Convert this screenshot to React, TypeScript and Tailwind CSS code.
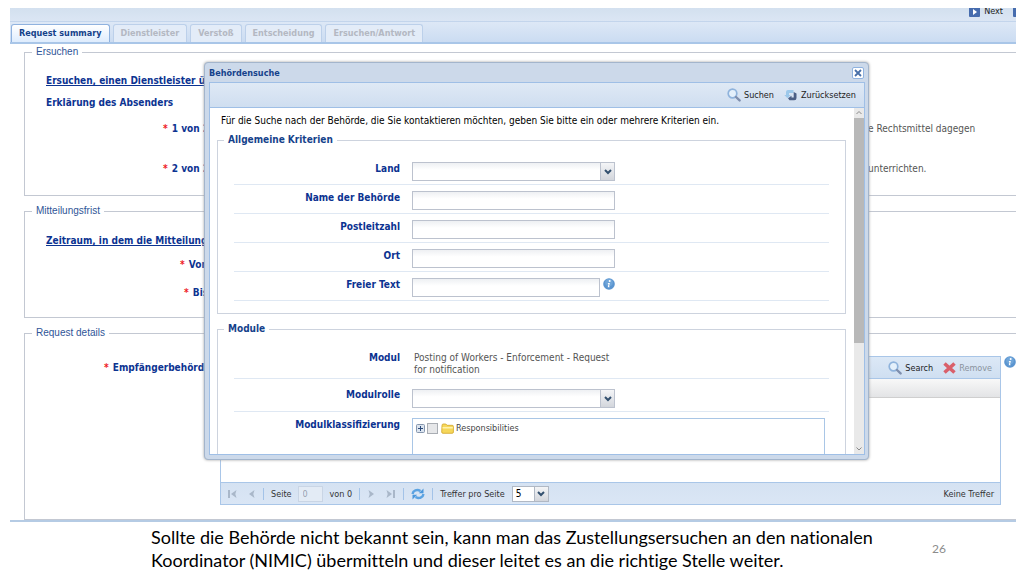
import { ReactNode } from "react";

type FieldRowProps = {
  id: string;
  label: string;
  children: ReactNode;
};

const tabs = ["Dienstleister", "Verstoß", "Entscheidung", "Ersuchen/Antwort"];

function Chevron() {
  return (
    <svg viewBox="0 0 8 6" className="h-[6px] w-2" fill="none" stroke="#33506f" strokeWidth="2">
      <path d="M1 1l3 3 3-3" />
    </svg>
  );
}

function SearchIcon() {
  return (
    <svg viewBox="0 0 14 14" className="h-3.5 w-3.5 shrink-0" fill="none">
      <circle cx="5.5" cy="5.5" r="4.3" fill="#e4f0fb" stroke="#8fb3dc" strokeWidth="1.7" />
      <path d="M9 9l3.6 3.4" stroke="#7f8fae" strokeWidth="2.4" strokeLinecap="round" />
    </svg>
  );
}

function ResetIcon() {
  return (
    <svg viewBox="0 0 14 12" className="h-3 w-3.5 shrink-0">
      <path d="M9.500 1H4Q2 1 2 3v3H.3l3.200 3.200L6.700 6H5V4h4.500z" fill="#9cc8ea" />
      <path d="M5.500 11.200h4.700q2.300 0 2.300-2.200V4.500L9.700 3v5.400H7.500V6.700L4 9.200z" fill="#4b5f85" />
    </svg>
  );
}

function InfoIcon() {
  return (
    <svg viewBox="0 0 12 12" className="h-3 w-3 shrink-0">
      <circle cx="6" cy="6" r="5.800" fill="#5b95d0" />
      <circle cx="6" cy="4.500" r="3.800" fill="#7db0e0" opacity=".6" />
      <circle cx="6.700" cy="3" r="1" fill="#fff" />
      <path d="M5 5h1.900L6 8.400h.8L6.500 9.300H4.700L5.500 5.900H4.800z" fill="#fff" />
    </svg>
  );
}

function NextIcon() {
  return (
    <svg viewBox="0 0 11 10" className="h-2.5 w-[11px] shrink-0">
      <rect width="11" height="10" rx="1" fill="#466cae" />
      <path d="M4 2l4 3-4 3z" fill="#fff" />
    </svg>
  );
}

function PagerArrow({ flip = false, bar = false }: { flip?: boolean; bar?: boolean }) {
  return (
    <svg viewBox="0 0 11 10" className={flip ? "h-2.5 w-[11px] -scale-x-100" : "h-2.5 w-[11px]"} fill="#a9b7c9">
      <path d="M1.500 1l5.500 4-5.500 4 1.200-4z" />
      {bar && <rect x="8" y="1" width="2" height="8" />}
    </svg>
  );
}

function RefreshIcon() {
  return (
    <svg viewBox="0 0 14 12" className="h-3 w-3.5" fill="none" stroke="#5ba3e2" strokeWidth="2.400">
      <path d="M1.500 6C2 2.500 6 .8 9.500 3" />
      <path d="M12.500 6c-.5 3.500-4.500 5.200-8 3" />
      <path d="M12.500.5v4.800H7.800zM1.500 11.500V6.700h4.700z" fill="#4a97dc" stroke="none" />
    </svg>
  );
}

function FolderIcon() {
  return (
    <svg viewBox="0 0 13 11" className="h-[11px] w-[13px]">
      <path d="M1 2.500Q1 1 2.200 1h2.600l1.300 1.300h5.100q1.200 0 1.200 1.200V9q0 1.300-1.200 1.300H2Q.7 10.300.7 9z" fill="#f6d75a" stroke="#d2a526" strokeWidth=".8" />
      <path d="M1.500 4h10.300v1.500H1.500z" fill="#fff2ac" />
    </svg>
  );
}

function Separator() {
  return <span className="h-3 w-px bg-[#a3c3e8]" />;
}

function DropDown({ id }: { id: string }) {
  return (
    <div className="relative w-[203px] self-start">
      <select id={id} className="block h-[19px] w-full appearance-none border border-[#bcc2ce] bg-linear-to-b from-[#eef0f3] to-white to-40% px-1" />
      <span className="pointer-events-none absolute inset-y-0 right-0 flex w-[15px] items-center justify-center border border-[#bcc2ce] bg-linear-to-b from-[#f4f5f7] to-[#d3d6dc]">
        <Chevron />
      </span>
    </div>
  );
}

function FieldRow({ id, label, children }: FieldRowProps) {
  return (
    <div className="flex h-[29px] gap-3 border-b border-[#dfe8f3] pt-[6px]">
      <label htmlFor={id} className="w-[166px] text-right leading-[13px] font-bold text-[#0c3391]">
        {label}
      </label>
      {children}
    </div>
  );
}

function TextBox({ id, short = false }: { id: string; short?: boolean }) {
  return (
    <input
      id={id}
      type="text"
      className={`${short ? "w-[188px]" : "w-[203px]"} h-[19px] border border-[#bcc2ce] bg-linear-to-b from-[#eef0f3] to-white to-40% px-1`}
    />
  );
}

function SearchDialog() {
  return (
    <div
      role="dialog"
      aria-label="Behördensuche"
      className="absolute top-[62px] right-[155px] left-[204px] flex h-[398px] flex-col rounded-[4px] border border-[#a3b5cc] bg-[#ccd9ea] pr-[3px] pb-1 pl-1 shadow-[0_0_3px_#a0a0a0]"
    >
      <div className="flex h-[19px] shrink-0 items-center justify-between pr-px text-[9px] font-bold text-[#15428b]">
        <h2>Behördensuche</h2>
        <button aria-label="Schließen" className="flex h-3 w-3 items-center justify-center rounded-[2px] border border-[#8fb2df] bg-white">
          <svg viewBox="0 0 8 8" className="h-2 w-2" stroke="#486fa8" strokeWidth="1.800">
            <path d="M1 1l6 6M7 1L1 7" />
          </svg>
        </button>
      </div>
      <div className="flex h-[26px] shrink-0 items-center justify-end gap-2.5 border border-[#9fbfe6] bg-linear-to-b from-[#dfe9f5] to-[#cfdef0] pr-2 text-[9px] text-[#222]">
        <button className="flex items-center gap-[3px]">
          <SearchIcon />
          Suchen
        </button>
        <button className="flex items-center gap-[3px]">
          <ResetIcon />
          Zurücksetzen
        </button>
      </div>
      <div className="flex min-h-0 flex-1 border-x border-b border-[#9fbfe6] bg-white">
        <div className="min-w-0 flex-1 overflow-hidden pr-2 pl-[7px]">
          <p className="px-1 pt-[6px] pb-[5px] leading-[14px] text-black">
            Für die Suche nach der Behörde, die Sie kontaktieren möchten, geben Sie bitte ein oder mehrere Kriterien ein.
          </p>
          <fieldset className="border border-[#cdd3de] px-4 pt-[9px] pb-3">
            <legend className="-ml-2.5 px-1 leading-[14px] font-bold text-[#15428b]">Allgemeine Kriterien</legend>
            <FieldRow id="land" label="Land">
              <DropDown id="land" />
            </FieldRow>
            <FieldRow id="name" label="Name der Behörde">
              <TextBox id="name" />
            </FieldRow>
            <FieldRow id="plz" label="Postleitzahl">
              <TextBox id="plz" />
            </FieldRow>
            <FieldRow id="ort" label="Ort">
              <TextBox id="ort" />
            </FieldRow>
            <FieldRow id="text" label="Freier Text">
              <div className="flex gap-[3px]">
                <TextBox id="text" short />
                <InfoIcon />
              </div>
            </FieldRow>
          </fieldset>
          <fieldset className="mt-2 border border-[#cdd3de] px-4 pt-[9px]">
            <legend className="-ml-2.5 px-1 leading-[14px] font-bold text-[#15428b]">Module</legend>
            <div className="flex gap-3 border-b border-[#dfe8f3] pt-[7px] pb-0.5">
              <span className="w-[166px] text-right leading-3 font-bold text-[#0c3391]">Modul</span>
              <p className="w-[212px] px-0.5 leading-3 text-[#555]">Posting of Workers - Enforcement - Request for notification</p>
            </div>
            <div className="flex gap-3 border-b border-[#dfe8f3] pt-2.5 pb-[3px]">
              <label htmlFor="rolle" className="w-[166px] text-right leading-3 font-bold text-[#0c3391]">
                Modulrolle
              </label>
              <DropDown id="rolle" />
            </div>
            <div className="flex gap-3 pt-[6px]">
              <span className="w-[166px] text-right leading-[14px] font-bold text-[#0c3391]">Modulklassifizierung</span>
              <div className="mr-1 h-20 flex-1 border border-[#a9c6e6] p-[3px]">
                <label className="flex items-center text-[9px] leading-3 text-[#444]">
                  <svg viewBox="0 0 9 9" className="mr-0.5 h-[9px] w-[9px]" fill="none">
                    <rect x=".5" y=".5" width="8" height="8" rx="1" fill="#dbe4ef" stroke="#8797ae" />
                    <path d="M2 4.500h5M4.500 2v5" stroke="#2c4a78" />
                  </svg>
                  <input type="checkbox" className="mr-[3px] h-[11px] w-[11px] appearance-none border border-[#a9adb3] bg-[#e6e7e9]" />
                  <FolderIcon />
                  <span className="ml-0.5">Responsibilities</span>
                </label>
              </div>
            </div>
          </fieldset>
        </div>
        <div className="flex w-2.5 flex-col items-center bg-[#e9e9e9]">
          <svg viewBox="0 0 8 10" className="h-2.5 w-2 shrink-0" fill="none" stroke="#8a8a8a">
            <path d="M1.500 6L4 3.500 6.500 6" />
          </svg>
          <div className="h-[225px] w-full bg-[#b8b8b8]" />
          <svg viewBox="0 0 8 10" className="mt-auto h-2.5 w-2 shrink-0" fill="none" stroke="#8a8a8a">
            <path d="M1.500 3.500L4 6l2.500-2.500" />
          </svg>
        </div>
      </div>
    </div>
  );
}

function ResultGrid() {
  return (
    <div className="min-w-0 flex-1 border border-[#a9c6e8] text-[9px]">
      <div className="flex h-[22px] items-center justify-end gap-2.5 border-b border-[#a9c6e8] bg-linear-to-b from-[#dce8f6] to-[#cfdff1] pr-2">
        <button className="flex items-center gap-[3px] text-[#222]">
          <SearchIcon />
          Search
        </button>
        <button disabled className="flex items-center gap-[3px] text-[#8b939e]">
          <svg viewBox="0 0 13 12" className="h-3 w-[13px]" stroke="#d9606b" strokeWidth="3.600">
            <path d="M1.500 1.500l10 9M11.500 1.500l-10 9" />
          </svg>
          Remove
        </button>
      </div>
      <div className="h-[19px] border-b border-[#cfcfcf] bg-linear-to-b from-[#f8f8f8] to-[#e3e4e6]" />
      <div className="h-[84px] bg-white" />
      <div className="flex h-[22px] items-center gap-[7px] border-t border-[#a9c6e8] bg-linear-to-b from-[#d5e2f2] to-[#dae6f5] px-[6px] text-[#333]">
        <button disabled aria-label="Erste Seite">
          <PagerArrow flip bar />
        </button>
        <button disabled aria-label="Vorherige Seite">
          <PagerArrow flip />
        </button>
        <Separator />
        <label className="flex items-center gap-1.5">
          Seite
          <input type="text" defaultValue="0" disabled className="h-4 w-[25px] border border-[#c9d5e5] bg-[#e3ebf5] px-1 text-[#9aa3b0]" />
        </label>
        <span>von 0</span>
        <Separator />
        <button disabled aria-label="Nächste Seite">
          <PagerArrow />
        </button>
        <button disabled aria-label="Letzte Seite">
          <PagerArrow bar />
        </button>
        <Separator />
        <button aria-label="Aktualisieren">
          <RefreshIcon />
        </button>
        <Separator />
        <label htmlFor="treffer">Treffer pro Seite</label>
        <div className="relative w-[37px]">
          <select id="treffer" className="block h-4 w-full appearance-none border border-[#b0b8c4] bg-white px-[3px] text-[10px] text-black">
            <option>5</option>
          </select>
          <span className="pointer-events-none absolute inset-y-0 right-0 flex w-[15px] items-center justify-center border border-[#b0b8c4] bg-linear-to-b from-[#f4f5f7] to-[#d3d6dc]">
            <Chevron />
          </span>
        </div>
        <span className="ml-auto">Keine Treffer</span>
      </div>
    </div>
  );
}

function Star() {
  return <span className="mr-px text-[#ee1c25]">* </span>;
}

export default function App() {
  return (
    <div className="relative overflow-hidden bg-white pt-2 font-['DejaVu_Sans_Condensed','DejaVu_Sans',sans-serif] text-[10px] leading-3">
      <main className="mr-2 ml-2.5 border-b-2 border-[#b5cbe4]">
        <div className="h-[14px] overflow-hidden border-b border-[#c3d5ec] bg-linear-to-b from-[#d3e0ef] to-[#dbe6f4]">
          <div className="flex h-[7px] items-center justify-end gap-2.5 text-[9px] leading-[7px] text-[#222]">
            <button className="flex items-center gap-1">
              <NextIcon />
              Next
            </button>
            <button aria-label="Last" className="w-[3px] overflow-hidden">
              <NextIcon />
            </button>
          </div>
        </div>
        <nav className="flex h-[22px] items-end gap-[3px] border-b-2 border-[#a9c6e8] bg-linear-to-b from-[#dde8f6] to-[#cbdcf2] pl-px text-[9px] font-bold">
          <button className="h-[18px] rounded-t-[3px] border border-b-0 border-[#8fb2df] bg-linear-to-b from-white to-[#deecfd] px-[7px] pb-0.5 text-[#15428b]">
            Request summary
          </button>
          {tabs.map((tab) => (
            <button key={tab} disabled className="h-[18px] rounded-t-[3px] border border-b-0 border-[#bcd0ea] bg-[#e3ecf8] px-[7px] pb-0.5 text-[#b4b8c2]">
              {tab}
            </button>
          ))}
        </nav>

        <div className="flex flex-col gap-[9px] pt-0.5 pl-[14px] text-[#0c3391]">
          <fieldset className="border border-r-0 border-[#c3c8d2] pt-3 pb-px pl-[21px] font-bold">
            <legend className="-ml-3.5 px-1 font-['Liberation_Sans'] text-[10px] leading-3 font-normal text-[#2f5597]">Ersuchen</legend>
            <p className="flex h-[22px] items-center underline">Ersuchen, einen Dienstleister über</p>
            <p className="flex h-[22px] items-center">Erklärung des Absenders</p>
            <div className="flex h-[30px] items-center">
              <span className="w-[822px] pl-[117px]">
                <Star />1 von 2
              </span>
              <span className="font-normal text-[#555]">e Rechtsmittel dagegen</span>
            </div>
            <div className="flex h-[50px] items-center">
              <span className="w-[822px] pl-[117px]">
                <Star />2 von 2
              </span>
              <span className="font-normal text-[#555]">unterrichten.</span>
            </div>
          </fieldset>

          <fieldset className="border border-r-0 border-[#c3c8d2] pt-[13px] pb-[9px] pl-[21px] font-bold">
            <legend className="-ml-3.5 px-1 font-['Liberation_Sans'] text-[10px] leading-3 font-normal text-[#2f5597]">Mitteilungsfrist</legend>
            <p className="flex h-[22px] items-center underline">Zeitraum, in dem die Mitteilung</p>
            <p className="flex h-[26px] items-center pl-[134px]">
              <span className="whitespace-pre">
                <Star />Vom
              </span>
            </p>
            <p className="flex h-[30px] items-center pl-[138px]">
              <span className="whitespace-pre">
                <Star />Bis
              </span>
            </p>
          </fieldset>

          <fieldset className="border border-r-0 border-[#c3c8d2] pt-[17px] pb-[14px]">
            <legend className="ml-[7px] px-1 font-['Liberation_Sans'] text-[10px] leading-3 text-[#2f5597]">Request details</legend>
            <div className="flex">
              <span className="w-[195px] pt-[6px] pl-[79px] font-bold whitespace-nowrap">
                <Star />Empfängerbehörde
              </span>
              <ResultGrid />
              <div className="w-[15px] pl-[3px]">
                <InfoIcon />
              </div>
            </div>
          </fieldset>
        </div>
      </main>

      <footer className="flex items-center justify-between pt-1 pr-[78px] pl-[151px] font-['Lato',sans-serif]">
        <p className="w-[740px] text-[18px] leading-[23px] text-black [font-variant-ligatures:none]">
          Sollte die Behörde nicht bekannt sein, kann man das Zustellungsersuchen an den nationalen Koordinator (NIMIC) übermitteln und
          dieser leitet es an die richtige Stelle weiter.
        </p>
        <span className="text-[12px] text-[#8c8c8c]">26</span>
      </footer>

      <SearchDialog />
    </div>
  );
}
